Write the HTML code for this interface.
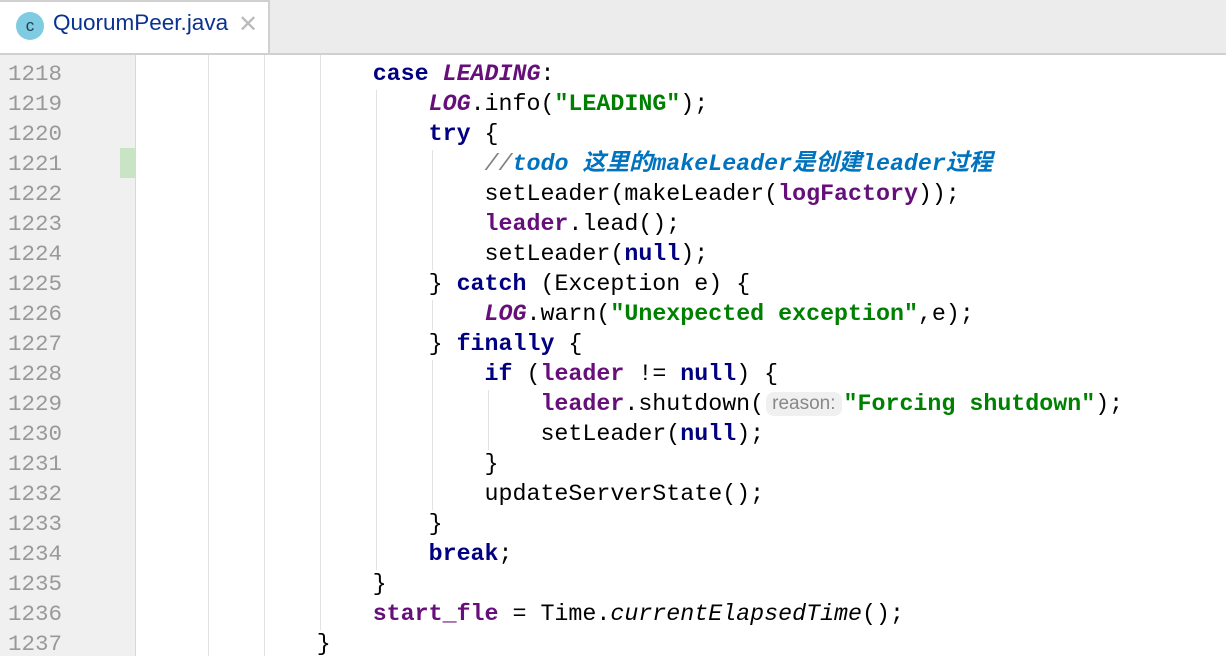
<!DOCTYPE html><html><head><style>
body{margin:0;width:1226px;height:656px;overflow:hidden;background:#fff;position:relative;font-family:"Liberation Mono",monospace}
.tabbar{position:absolute;left:0;top:0;width:1226px;height:53px;background:#ececec;border-bottom:2px solid #d0d0d0}
.tab{position:absolute;left:0;top:0;width:270px;height:53px;background:#fff;border-right:2px solid #d0d0d0;border-top:2px solid #d0d0d0;box-sizing:border-box}
.ic{position:absolute;left:16px;top:10px;width:28px;height:28px;border-radius:50%;background:#7fcbe2;color:#21404f;font:17px "Liberation Sans",sans-serif;text-align:center;line-height:28px}
.tt{position:absolute;left:53px;top:8px;font:22.5px "Liberation Sans",sans-serif;color:#0b3290}
.x{position:absolute;left:238px;top:8px;font:24px "Liberation Sans",sans-serif;color:#bbb}
.gut{position:absolute;left:0;top:55px;width:135px;height:601px;background:#f0f0f0;border-right:1px solid #d8d8d8}
.ln{position:absolute;left:8px;font-size:22.5px;color:#999;line-height:30px}
.g{position:absolute;width:1px;background:#e2e2e2}
.c{position:absolute;left:149px;font-size:23.3px;line-height:30px;white-space:pre;color:#000}
.k{color:#000080;font-weight:bold}.f{color:#660e7a;font-weight:bold}.fi{color:#660e7a;font-weight:bold;font-style:italic}
.s{color:#008000;font-weight:bold}.cm{color:#808080;font-style:italic}.td{color:#0073bf;font-weight:bold;font-style:italic;font-family:"Liberation Mono","Noto Sans CJK SC",monospace}
.h{display:inline-block;font:19px "Liberation Sans",sans-serif;color:#888;background:#f0f0f0;border-radius:8px;padding:0 6px;line-height:24px;vertical-align:1px;margin:0 2px}
</style></head><body>
<div class="tabbar"></div>
<div class="tab"><div class="ic">c</div><div class="tt">QuorumPeer.java</div><div class="x">✕</div></div>
<div class="gut"></div>
<div style="position:absolute;left:120px;top:148px;width:15px;height:30px;background:#c9e3c5"></div>
<div class="g" style="left:208px;top:55px;height:601px"></div>
<div class="g" style="left:264px;top:55px;height:601px"></div>
<div class="g" style="left:320px;top:55px;height:575px"></div>
<div class="g" style="left:376px;top:90px;height:480px"></div>
<div class="g" style="left:432px;top:150px;height:120px"></div>
<div class="g" style="left:432px;top:300px;height:30px"></div>
<div class="g" style="left:432px;top:360px;height:150px"></div>
<div class="g" style="left:488px;top:390px;height:60px"></div>
<div class="ln" style="top:59px">1218<br>1219<br>1220<br>1221<br>1222<br>1223<br>1224<br>1225<br>1226<br>1227<br>1228<br>1229<br>1230<br>1231<br>1232<br>1233<br>1234<br>1235<br>1236<br>1237</div>
<div class="c" style="top:59px">                <span class="k">case</span> <span class="fi">LEADING</span>:
                    <span class="fi">LOG</span>.info(<span class="s">"LEADING"</span>);
                    <span class="k">try</span> {
                        <span class="cm">//</span><span class="td">todo 这里的makeLeader是创建leader过程</span>
                        setLeader(makeLeader(<span class="f">logFactory</span>));
                        <span class="f">leader</span>.lead();
                        setLeader(<span class="k">null</span>);
                    } <span class="k">catch</span> (Exception e) {
                        <span class="fi">LOG</span>.warn(<span class="s">"Unexpected exception"</span>,e);
                    } <span class="k">finally</span> {
                        <span class="k">if</span> (<span class="f">leader</span> != <span class="k">null</span>) {
                            <span class="f">leader</span>.shutdown(<span class="h">reason:</span><span class="s">"Forcing shutdown"</span>);
                            setLeader(<span class="k">null</span>);
                        }
                        updateServerState();
                    }
                    <span class="k">break</span>;
                }
                <span class="f">start_fle</span> = Time.<i>currentElapsedTime</i>();
            }</div>
</body></html>
